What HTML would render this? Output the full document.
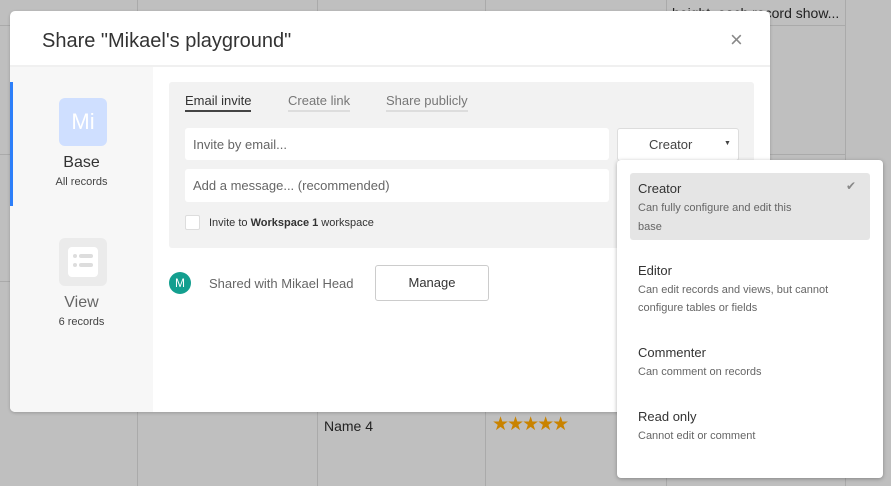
<!DOCTYPE html>
<html><head><style>
*{box-sizing:border-box;margin:0;padding:0}
body{width:891px;height:486px;overflow:hidden;background:#bfbfbf;font-family:"Liberation Sans",sans-serif;position:relative;color:#333}
.a{position:absolute}
.vl{position:absolute;top:0;bottom:0;width:1px;background:#aaa}
.hl{position:absolute;height:1px;background:#aaa}
</style></head><body>
<div class="vl" style="left:137px"></div>
<div class="vl" style="left:317px"></div>
<div class="vl" style="left:485px"></div>
<div class="vl" style="left:666px"></div>
<div class="vl" style="left:845px"></div>
<div class="hl" style="left:0;width:10px;top:25px"></div>
<div class="hl" style="left:666px;width:180px;top:25px"></div>
<div class="hl" style="left:666px;width:180px;top:154px"></div>
<div class="hl" style="left:0;width:10px;top:154px"></div>
<div class="hl" style="left:0;width:10px;top:281px"></div>
<div class="a" style="left:672px;top:5px;font-size:14px;color:#222;z-index:0">height, each record show...</div>
<div class="a" style="left:324px;top:418px;font-size:14px;color:#222">Name 4</div>
<div class="a" style="left:492px;top:413px;font-size:19px;color:#c98300;letter-spacing:-2px">★★★★★</div>

<div class="a" style="left:10px;top:11px;width:760px;height:401px;background:#fff;border-radius:5px;overflow:hidden;box-shadow:0 1px 3px rgba(0,0,0,.2);z-index:2">
  <div class="a" style="left:32px;top:19px;font-size:20px;color:#333">Share "Mikael's playground"</div>
  <div class="a" style="left:720px;top:16px;font-size:22px;color:#888">×</div>
  <div class="a" style="left:0;top:54px;width:760px;height:2px;background:#f0f0f0"></div>
  <div class="a" style="left:0;top:56px;width:143px;height:345px;background:#f7f7f7"></div>
  <div class="a" style="left:0;top:71px;width:3px;height:124px;background:#2d7ff9"></div>
  <div class="a" style="left:49px;top:87px;width:48px;height:48px;background:#cfdfff;border-radius:6px;color:#fff;font-size:22px;text-align:center;line-height:48px">Mi</div>
  <div class="a" style="left:0;top:143px;width:143px;text-align:center;font-size:16px;color:#333">Base</div>
  <div class="a" style="left:0;top:165px;width:143px;text-align:center;font-size:11px;color:#444">All records</div>
  <div class="a" style="left:49px;top:227px;width:48px;height:48px;background:#ebebeb;border-radius:6px"></div>
  <div class="a" style="left:58px;top:236px;width:30px;height:30px;background:#fff;border-radius:4px"></div>
  <div class="a" style="left:63px;top:243px;width:4px;height:4px;background:#ddd;border-radius:2px"></div>
  <div class="a" style="left:69px;top:243px;width:14px;height:4px;background:#ddd;border-radius:2px"></div>
  <div class="a" style="left:63px;top:252px;width:4px;height:4px;background:#ddd;border-radius:2px"></div>
  <div class="a" style="left:69px;top:252px;width:14px;height:4px;background:#ddd;border-radius:2px"></div>
  <div class="a" style="left:0;top:283px;width:143px;text-align:center;font-size:16px;color:#666">View</div>
  <div class="a" style="left:0;top:305px;width:143px;text-align:center;font-size:11px;color:#444">6 records</div>

  <div class="a" style="left:159px;top:71px;width:585px;height:166px;background:#f2f2f2;border-radius:3px"></div>
  <div class="a" style="left:175px;top:82px;font-size:13px;color:#333;border-bottom:2px solid #444;padding-bottom:2px">Email invite</div>
  <div class="a" style="left:278px;top:82px;font-size:13px;color:#777;border-bottom:2px solid #ddd;padding-bottom:2px">Create link</div>
  <div class="a" style="left:376px;top:82px;font-size:13px;color:#777;border-bottom:2px solid #ddd;padding-bottom:2px">Share publicly</div>
  <div class="a" style="left:175px;top:117px;width:424px;height:32px;background:#fff;border-radius:3px;font-size:13px;color:#666;padding:9px 8px">Invite by email...</div>
  <div class="a" style="left:175px;top:158px;width:424px;height:33px;background:#fff;border-radius:3px;font-size:13px;color:#666;padding:9px 8px">Add a message... (recommended)</div>
  <div class="a" style="left:175px;top:204px;width:15px;height:15px;background:#fff;border:1px solid #ddd;border-radius:2px"></div>
  <div class="a" style="left:199px;top:206px;font-size:11px;color:#333">Invite to <b>Workspace 1</b> workspace</div>
  <div class="a" style="left:607px;top:117px;width:122px;height:33px;background:#fff;border:1px solid #ddd;border-radius:3px;font-size:13px;color:#444;padding:8px 0 0 31px">Creator<span style="position:absolute;left:106px;top:11px;font-size:7px">▼</span></div>

  <div class="a" style="left:159px;top:261px;width:22px;height:22px;border-radius:50%;background:#139f8f;color:#fff;font-size:12px;text-align:center;line-height:22px">M</div>
  <div class="a" style="left:199px;top:265px;font-size:13px;color:#666">Shared with Mikael Head</div>
  <div class="a" style="left:365px;top:254px;width:114px;height:36px;border:1px solid #ccc;border-radius:3px;font-size:13px;color:#333;text-align:center;line-height:34px">Manage</div>
</div>

<div class="a" style="left:617px;top:160px;width:266px;height:318px;background:#fff;border-radius:4px;box-shadow:0 1px 4px rgba(0,0,0,.3);z-index:3">
  <div class="a" style="left:13px;top:13px;width:240px;height:67px;background:#e5e5e5;border-radius:3px"></div>
  <div class="a" style="left:229px;top:19px;font-size:12px;color:#888">✔</div>
  <div class="a" style="left:21px;top:21px;font-size:13px;color:#333">Creator</div>
  <div class="a" style="left:21px;top:39px;font-size:11px;color:#666;line-height:19px;width:175px">Can fully configure and edit this base</div>
  <div class="a" style="left:21px;top:103px;font-size:13px;color:#333">Editor</div>
  <div class="a" style="left:21px;top:121px;font-size:11px;color:#666;line-height:18px;width:220px">Can edit records and views, but cannot configure tables or fields</div>
  <div class="a" style="left:21px;top:185px;font-size:13px;color:#333">Commenter</div>
  <div class="a" style="left:21px;top:203px;font-size:11px;color:#666;line-height:18px">Can comment on records</div>
  <div class="a" style="left:21px;top:249px;font-size:13px;color:#333">Read only</div>
  <div class="a" style="left:21px;top:267px;font-size:11px;color:#666;line-height:18px">Cannot edit or comment</div>
</div>
</body></html>
